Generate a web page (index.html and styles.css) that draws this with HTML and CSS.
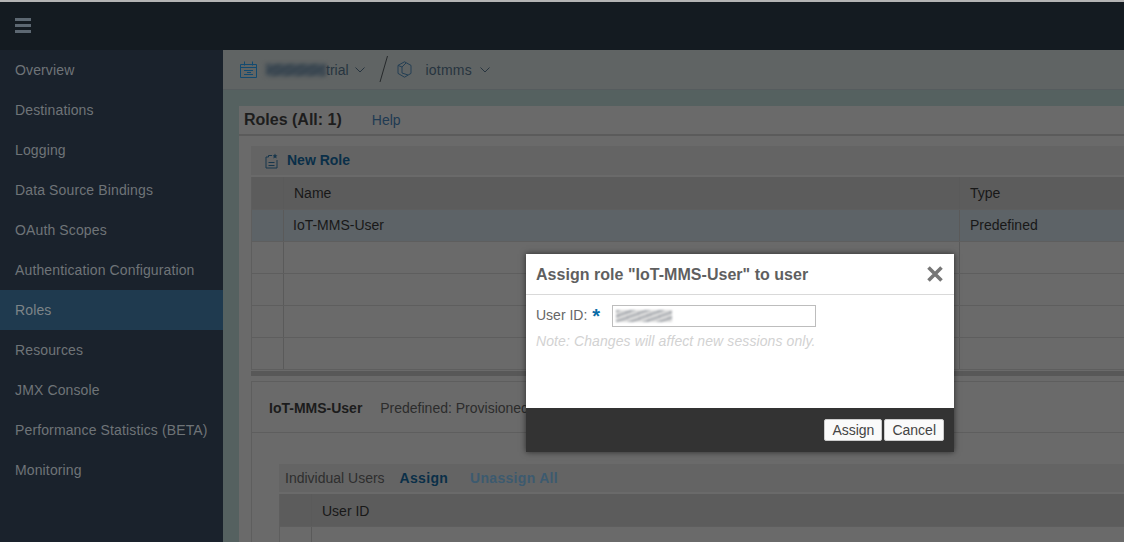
FILE: index.html
```html
<!DOCTYPE html>
<html lang="en">
<head>
    <meta charset="UTF-8">
    <meta name="viewport" content="width=device-width, initial-scale=1.0">
    <title>Roles</title>
    <link rel="stylesheet" href="styles.css">
</head>
<body>
    <div id="topbar">
        <div class="burger"><span></span><span></span><span></span></div>
    </div>

    <div id="layout">
        <nav id="sidebar">
            <a href="#">Overview</a>
            <a href="#">Destinations</a>
            <a href="#">Logging</a>
            <a href="#">Data Source Bindings</a>
            <a href="#">OAuth Scopes</a>
            <a href="#">Authentication Configuration</a>
            <a href="#" class="active">Roles</a>
            <a href="#">Resources</a>
            <a href="#">JMX Console</a>
            <a href="#">Performance Statistics (BETA)</a>
            <a href="#">Monitoring</a>
        </nav>

        <main id="content">
            <div id="breadcrumb">
                <svg class="crumb-icon" width="17" height="17" viewBox="0 0 17 17" fill="none" stroke="#124a70" stroke-width="1">
                    <path d="M.5 3.5h16v13H.5z"/>
                    <path d="M4.5 .5v4M12.5 .5v4M.5 6.5h16M4 9.5h9M7 11.5h4M4 13.5h9"/>
                </svg>
                <span class="smudge"></span>
                <span class="crumb-text">trial</span>
                <svg class="chevron" width="10" height="6" viewBox="0 0 10 6" fill="none" stroke="#27343f" stroke-width="1"><path d="M.5 .5l4.5 4.5 4.5-4.5"/></svg>
                <svg class="slash" width="10" height="27" viewBox="0 0 10 27" fill="none" stroke="#26292b" stroke-width="1"><path d="M8.5 0L1 26"/></svg>
                <svg class="crumb-icon cube" width="15" height="17" viewBox="0 0 15 17" fill="none" stroke="#243f54" stroke-width="1">
                    <path d="M7.5 .8l6.5 3.6v8l-6.5 3.8L1 12.4v-8z"/>
                    <path d="M1 4.4l4 1.6v6M9 2l-4 4M5 12l6 2"/>
                </svg>
                <span class="crumb-text wide">iotmms</span>
                <svg class="chevron" width="10" height="6" viewBox="0 0 10 6" fill="none" stroke="#27343f" stroke-width="1"><path d="M.5 .5l4.5 4.5 4.5-4.5"/></svg>
            </div>

            <div id="panel">
                <div id="panel-head">
                    <h2>Roles (All: 1)</h2>
                    <a href="#">Help</a>
                </div>

                <section id="roles">
                    <div class="toolbar">
                        <svg width="13" height="16" viewBox="0 0 13 16" fill="none" stroke="#17364c" stroke-width="1">
                            <path d="M7 2.5H3.5v1.5H1v11h11V7"/>
                            <path d="M3.5 9.5h6M3.5 12.5h6"/>
                            <path d="M10 .5l.8 1.7 1.7.2-1.3 1.2.4 1.8-1.6-.9-1.6.9.4-1.8-1.3-1.2 1.7-.2z" fill="#17364c" stroke="none"/>
                        </svg>
                        <a href="#" class="action">New Role</a>
                    </div>
                    <div class="row head"><div class="sel"></div><div class="name">Name</div><div class="type">Type</div></div>
                    <div class="row picked"><div class="sel"></div><div class="name tight">IoT-MMS-User</div><div class="type">Predefined</div></div>
                    <div class="row"><div class="sel"></div><div class="name"></div><div class="type"></div></div>
                    <div class="row"><div class="sel"></div><div class="name"></div><div class="type"></div></div>
                    <div class="row"><div class="sel"></div><div class="name"></div><div class="type"></div></div>
                    <div class="row"><div class="sel"></div><div class="name"></div><div class="type"></div></div>
                    <div class="splitter"></div>
                </section>

                <section id="details">
                    <div id="details-head">
                        <strong>IoT-MMS-User</strong>
                        <span>Predefined: Provisioned</span>
                    </div>
                    <div id="details-body">
                        <div class="toolbar users">
                            <span class="label">Individual Users</span>
                            <a href="#" class="action">Assign</a>
                            <a href="#" class="action off">Unassign All</a>
                        </div>
                        <div class="row head"><div class="sel"></div><div class="name">User ID</div></div>
                        <div class="row"><div class="sel"></div><div class="name"></div></div>
                    </div>
                </section>
            </div>
        </main>
    </div>

    <div id="dialog">
        <div id="dialog-head">
            <h3>Assign role "IoT-MMS-User" to user</h3>
            <svg width="16" height="16" viewBox="0 0 16 16" stroke="#767676" stroke-width="3.6"><path d="M1.5 1.5l13 13M14.5 1.5l-13 13"/></svg>
        </div>
        <div id="dialog-body">
            <div class="field">
                <label for="userId">User ID:</label>
                <span class="req">*</span>
                <div class="input-box" id="userId"><span class="smudge light"></span></div>
            </div>
            <p class="note">Note: Changes will affect new sessions only.</p>
        </div>
        <div id="dialog-foot">
            <button>Assign</button>
            <button>Cancel</button>
        </div>
    </div>
</body>
</html>
```

FILE: styles.css
```css
body {
    font-family: "Liberation Sans", Arial, sans-serif;
    font-size: 14px;
    margin: 0;
    height: 100vh;
    overflow: hidden;
    background-color: #141b21;
    border-top: 2px solid #b4b4b4;
    box-sizing: border-box;
}

a {
    text-decoration: none;
}

#topbar {
    height: 48px;
    background-color: #141b21;
    display: flex;
    align-items: center;
    padding-left: 15px;
}

.burger {
    width: 16px;
    display: flex;
    flex-direction: column;
    gap: 3px;
    margin-top: -1px;
}

.burger span {
    display: block;
    height: 3px;
    background-color: #5d6872;
}

#layout {
    display: flex;
    height: 492px;
}

#sidebar {
    width: 223px;
    flex: none;
    background-color: #1a222c;
}

#sidebar a {
    display: block;
    height: 40px;
    line-height: 40px;
    padding-left: 15px;
    color: #6f7478;
    letter-spacing: .13px;
}

#sidebar a.active {
    background-color: #1f3a4f;
    color: #7d8488;
}

#content {
    flex: 1;
    min-width: 0;
    background-color: #556160;
}

#breadcrumb {
    height: 39px;
    background-color: #606464;
    border-bottom: 1px solid #565c5e;
    display: flex;
    align-items: center;
    padding-left: 17px;
}

.crumb-text {
    color: #27343f;
}

.crumb-text.wide {
    margin-left: 1px;
    letter-spacing: .2px;
}

.smudge {
    display: inline-block;
    width: 60px;
    height: 12px;
    margin-left: 9px;
    background: repeating-linear-gradient(150deg, #2f3d49 0 3px, #47525a 3px 6px);
    filter: blur(2px);
}

.smudge.light {
    width: 56px;
    height: 12px;
    margin: 0;
    background: repeating-linear-gradient(160deg, #a4a8ad 0 2px, #dcdcdc 2px 5px);
    filter: blur(1px);
}

.chevron {
    margin-left: 6px;
}

.slash {
    margin-left: 14px;
}

.cube {
    margin-left: 8px;
    margin-right: 13px;
}

.crumb-text.wide + .chevron {
    margin-left: 8px;
}

#panel {
    margin: 16px 0 0 16px;
    height: 436px;
    background-color: #6a6a6a;
    overflow: hidden;
}

#panel-head {
    height: 28px;
    border-bottom: 2px solid #5b5b5b;
    display: flex;
    align-items: center;
    padding-left: 5px;
    margin-bottom: 10px;
}

#panel-head h2 {
    font-size: 16px;
    margin: 0 30px 0 0;
    color: #1d1d1d;
}

#panel-head a {
    color: #203a52;
}

#roles {
    margin-left: 12px;
}

.toolbar {
    height: 29px;
    background-color: #646464;
    display: flex;
    align-items: center;
    padding-left: 14px;
    margin-bottom: 2px;
}

.action {
    font-weight: bold;
    color: #0a2f48;
    margin-left: 9px;
    margin-top: -1px;
}

.row {
    display: flex;
    height: 31px;
    border-bottom: 1px solid #5e5e5e;
    border-left: 1px solid #5e5e5e;
}

.row.head {
    height: 32px;
    background-color: #5c5c5c;
    color: #181818;
}

.row.picked {
    background-color: #5d6367;
    color: #181818;
}

.sel {
    width: 31px;
    flex: none;
    border-right: 1px solid #5a5a5a;
}

.name {
    flex: 1;
    line-height: 31px;
    padding-left: 10px;
}

.row.head .name {
    line-height: 33px;
}

.name.tight {
    padding-left: 9px;
}

.type {
    width: 154px;
    flex: none;
    line-height: 31px;
    padding-left: 10px;
    border-left: 1px solid #5a5a5a;
}

.row.head .type {
    line-height: 33px;
}

.splitter {
    height: 5px;
    background-color: #585858;
    margin-top: 1px;
}

#details {
    margin: 5px 0 0 12px;
    border: 1px solid #5e5e5e;
    border-right: none;
}

#details-head {
    height: 50px;
    line-height: 52px;
    padding-left: 17px;
    border-bottom: 1px solid #5e5e5e;
    color: #2c2c2c;
}

#details-head strong {
    color: #1c1c1c;
    margin-right: 14px;
}

#details-body {
    padding: 31px 0 0 27px;
}

.toolbar.users {
    height: 28px;
    padding-left: 6px;
}

.label {
    color: #2e2e2e;
}

.toolbar.users .action {
    margin-left: 15px;
    margin-top: 0;
    letter-spacing: .3px;
}

.toolbar.users .off {
    margin-left: 22px;
    color: #3c5a6f;
}

#details-body .row.head .name {
    line-height: 35px;
}

#dialog {
    position: absolute;
    left: 526px;
    top: 254px;
    width: 428px;
    height: 198px;
    background-color: #fff;
    box-shadow: 0 0 6px rgba(0, 0, 0, 0.6);
    display: flex;
    flex-direction: column;
}

#dialog-head {
    height: 40px;
    flex: none;
    border-bottom: 1px solid #d9d9d9;
    display: flex;
    align-items: center;
    justify-content: space-between;
    padding: 0 11px 0 10px;
}

#dialog-head h3 {
    font-size: 16px;
    margin: 2px 0 0;
    color: #5f5f5f;
    letter-spacing: .03px;
}

#dialog-body {
    flex: 1;
    padding: 10px 10px 0;
}

.field {
    display: flex;
    align-items: center;
    height: 22px;
}

.field label {
    color: #666;
    margin-top: -3px;
}

.req {
    color: #0a6ca8;
    font-weight: bold;
    font-size: 20px;
    margin-left: 5px;
    width: 20px;
    line-height: 18px;
}

.input-box {
    width: 199px;
    height: 20px;
    border: 1px solid #bdbdbd;
    display: flex;
    align-items: center;
    padding-left: 3px;
}

.note {
    margin: 6px 0 0;
    color: #d2d2d2;
    font-style: italic;
    letter-spacing: .1px;
}

#dialog-foot {
    height: 44px;
    flex: none;
    background-color: #333;
    display: flex;
    justify-content: flex-end;
    align-items: center;
    gap: 2px;
    padding-right: 10px;
    box-sizing: border-box;
}

button {
    font-family: inherit;
    font-size: 14px;
    height: 22px;
    padding: 0 7px;
    color: #444;
    background-color: #fafafa;
    border: 1px solid #ccc;
    border-radius: 2px;
}
```
